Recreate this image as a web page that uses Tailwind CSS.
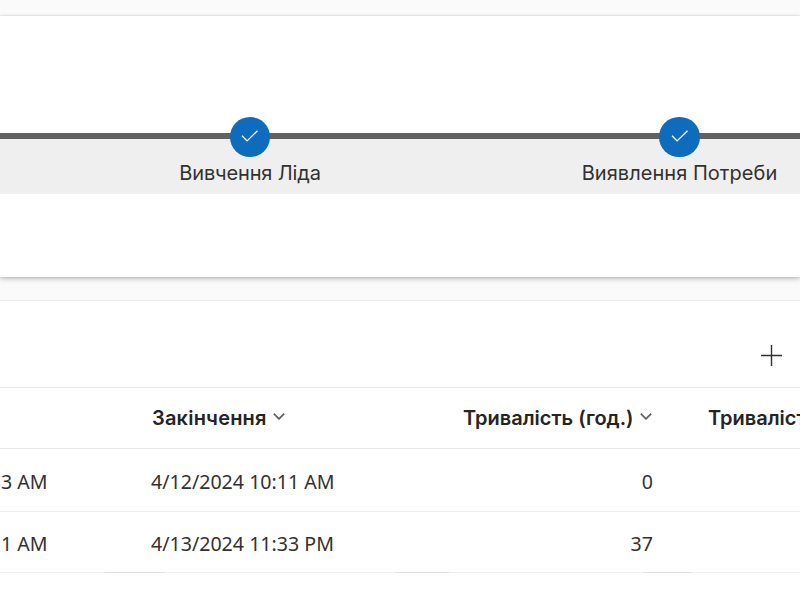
<!DOCTYPE html>
<html lang="uk">

<head>
    <meta charset="UTF-8">
    <meta name="viewport" content="width=device-width, initial-scale=1.0">
    <title>Лід</title>
    <script src="https://cdn.jsdelivr.net/npm/@tailwindcss/browser@4"></script>
</head>

<body class="w-[800px] h-[600px] overflow-hidden bg-[#fafafa] text-[#323130] font-['Inter',sans-serif]">
    <!-- process stages -->
    <section class="mt-4 h-[261px] overflow-hidden bg-white pt-[117px] shadow-[0_0_2px_rgba(0,0,0,0.18),0_2px_5px_rgba(0,0,0,0.22)]">
        <div class="h-[61px] border-t-6 border-[#616161] bg-[#efefef]">
            <div class="grid w-[859px] grid-cols-[430px_429px] ml-[35px]">
                <div class="flex flex-col items-center -mt-[22.5px]">
                    <div class="flex size-[40.5px] items-center justify-center rounded-full bg-[#0f6cbd]">
                        <svg class="h-3 w-[18px] -mt-px" viewBox="0 0 18 12" fill="none" stroke="white" stroke-width="1.3">
                            <path d="M1 5.8 6.1 10.9 16.5.7" />
                        </svg>
                    </div>
                    <span class="mt-[1.5px] text-[20px] leading-7 tracking-[-0.15px] whitespace-nowrap">Вивчення Ліда</span>
                </div>
                <div class="flex flex-col items-center -mt-[22.5px]">
                    <div class="flex size-[40.5px] items-center justify-center rounded-full bg-[#0f6cbd]">
                        <svg class="h-3 w-[18px] -mt-px" viewBox="0 0 18 12" fill="none" stroke="white" stroke-width="1.3">
                            <path d="M1 5.8 6.1 10.9 16.5.7" />
                        </svg>
                    </div>
                    <span class="mt-[1.5px] text-[20px] leading-7 tracking-[0.04px] whitespace-nowrap">Виявлення Потреби</span>
                </div>
            </div>
        </div>
    </section>

    <!-- grid of records -->
    <section class="mt-[23px] h-[300px] overflow-hidden border-t border-[#ebebeb] bg-white">
        <div class="flex h-[87px] items-center justify-end border-b border-[#e6e6e6] pt-[23px] pr-[18px]">
            <svg class="size-[21px]" viewBox="0 0 21 21" fill="none" stroke="#323130" stroke-width="1.4">
                <path d="M10.5 0V21M0 10.5H21" />
            </svg>
        </div>
        <div class="grid h-[61px] grid-cols-[135px_290px_244px_131px] items-center border-b border-[#e6e6e6] text-[20px] font-semibold text-[#242424]">
            <div></div>
            <div class="flex items-center gap-[6px] pl-[17px] whitespace-nowrap">
                <span class="tracking-[0.2px]">Закінчення</span>
                <svg class="h-[7px] w-3 -mt-[3px]" viewBox="0 0 12 7" fill="none" stroke="#616161" stroke-width="1.7">
                    <path d="M.8.7 6 5.9 11.2.7" />
                </svg>
            </div>
            <div class="flex items-center justify-end gap-[6px] pr-[17.5px] whitespace-nowrap">
                <span>Тривалість (год.)</span>
                <svg class="h-[7px] w-3 -mt-[3px]" viewBox="0 0 12 7" fill="none" stroke="#616161" stroke-width="1.7">
                    <path d="M.8.7 6 5.9 11.2.7" />
                </svg>
            </div>
            <div class="overflow-hidden pl-[39px] whitespace-nowrap">Тривалість</div>
        </div>
        <div class="grid h-[63px] grid-cols-[135px_290px_244px_131px] items-center border-b border-[#efefef] pt-1 font-['Noto_Sans',sans-serif] text-[19.6px]">
            <div class="pl-px">3 AM</div>
            <div class="pl-4">4/12/2024 10:11 AM</div>
            <div class="pr-4 text-right">0</div>
        </div>
        <div class="grid h-[61px] grid-cols-[135px_290px_244px_131px] items-center border-b border-[#efefef] pt-[3px] font-['Noto_Sans',sans-serif] text-[19.6px]">
            <div class="pl-px">1 AM</div>
            <div class="pl-4">4/13/2024 11:33 PM</div>
            <div class="pr-4 text-right">37</div>
        </div>
        <!-- column resize edges -->
        <div class="-mt-px flex h-px">
            <div class="ml-[105px] w-[60px] bg-[#e2e2e2]"></div>
            <div class="ml-[230px] w-[54px] bg-[#e2e2e2]"></div>
            <div class="ml-[194px] w-[49px] bg-[#e2e2e2]"></div>
        </div>
    </section>
</body>

</html>
